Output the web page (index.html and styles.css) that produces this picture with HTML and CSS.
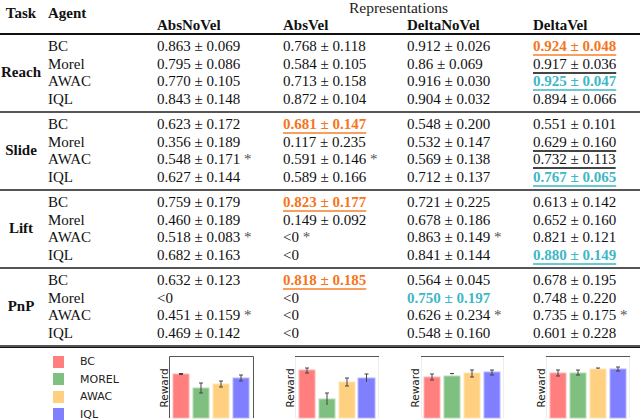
FILE: index.html
```html
<!DOCTYPE html>
<html>
<head>
<meta charset="utf-8">
<link rel="stylesheet" href="styles.css">
</head>
<body>
<div class="page">
  <div class="thead">
    <div class="h-task">Task</div>
    <div class="h-agent">Agent</div>
    <div class="h-rep">Representations</div>
    <div class="h-col">AbsNoVel</div>
    <div class="h-col">AbsVel</div>
    <div class="h-col">DeltaNoVel</div>
    <div class="h-col">DeltaVel</div>
  </div>

  <div class="section">
    <div class="task">Reach</div>
    <div class="agent">BC</div><div>0.863 ± 0.069</div><div>0.768 ± 0.118</div><div>0.912 ± 0.026</div><div><span class="best-o">0.924 ± 0.048</span></div>
    <div class="agent">Morel</div><div>0.795 ± 0.086</div><div>0.584 ± 0.105</div><div>0.86 ± 0.069</div><div><span class="second">0.917 ± 0.036</span></div>
    <div class="agent">AWAC</div><div>0.770 ± 0.105</div><div>0.713 ± 0.158</div><div>0.916 ± 0.030</div><div><span class="best-t">0.925 ± 0.047</span></div>
    <div class="agent">IQL</div><div>0.843 ± 0.148</div><div>0.872 ± 0.104</div><div>0.904 ± 0.032</div><div>0.894 ± 0.066</div>
  </div>

  <div class="section">
    <div class="task">Slide</div>
    <div class="agent">BC</div><div>0.623 ± 0.172</div><div><span class="best-o">0.681 ± 0.147</span></div><div>0.548 ± 0.200</div><div>0.551 ± 0.101</div>
    <div class="agent">Morel</div><div>0.356 ± 0.189</div><div>0.117 ± 0.235</div><div>0.532 ± 0.147</div><div><span class="second">0.629 ± 0.160</span></div>
    <div class="agent">AWAC</div><div>0.548 ± 0.171 <span class="ast">*</span></div><div>0.591 ± 0.146 <span class="ast">*</span></div><div>0.569 ± 0.138</div><div><span class="second">0.732 ± 0.113</span></div>
    <div class="agent">IQL</div><div>0.627 ± 0.144</div><div>0.589 ± 0.166</div><div>0.712 ± 0.137</div><div><span class="best-t">0.767 ± 0.065</span></div>
  </div>

  <div class="section">
    <div class="task">Lift</div>
    <div class="agent">BC</div><div>0.759 ± 0.179</div><div><span class="best-o">0.823 ± 0.177</span></div><div>0.721 ± 0.225</div><div>0.613 ± 0.142</div>
    <div class="agent">Morel</div><div>0.460 ± 0.189</div><div>0.149 ± 0.092</div><div>0.678 ± 0.186</div><div>0.652 ± 0.160</div>
    <div class="agent">AWAC</div><div>0.518 ± 0.083 <span class="ast">*</span></div><div>&lt;0 <span class="ast">*</span></div><div>0.863 ± 0.149 <span class="ast">*</span></div><div>0.821 ± 0.121</div>
    <div class="agent">IQL</div><div>0.682 ± 0.163</div><div>&lt;0</div><div>0.841 ± 0.144</div><div><span class="best-t">0.880 ± 0.149</span></div>
  </div>

  <div class="section">
    <div class="task">PnP</div>
    <div class="agent">BC</div><div>0.632 ± 0.123</div><div><span class="best-o">0.818 ± 0.185</span></div><div>0.564 ± 0.045</div><div>0.678 ± 0.195</div>
    <div class="agent">Morel</div><div>&lt;0</div><div>&lt;0</div><div><span class="teal">0.750 ± 0.197</span></div><div>0.748 ± 0.220</div>
    <div class="agent">AWAC</div><div>0.451 ± 0.159 <span class="ast">*</span></div><div>&lt;0</div><div>0.626 ± 0.234 <span class="ast">*</span></div><div>0.735 ± 0.175 <span class="ast">*</span></div>
    <div class="agent">IQL</div><div>0.469 ± 0.142</div><div>&lt;0</div><div>0.548 ± 0.160</div><div>0.601 ± 0.228</div>
  </div>

  <div class="charts">
    <div class="legend">
      <div class="leg"><span class="sw c-bc"></span>BC</div>
      <div class="leg"><span class="sw c-morel"></span>MOREL</div>
      <div class="leg"><span class="sw c-awac"></span>AWAC</div>
      <div class="leg"><span class="sw c-iql"></span>IQL</div>
    </div>

    <svg class="chart" width="110" height="72" viewBox="0 0 110 72">
      <text class="ylab" transform="translate(11 38) rotate(-90)">Reward</text>
      <rect class="b-bc" x="16" y="24" width="16" height="44"/>
      <rect class="b-morel" x="36" y="38" width="16" height="30"/>
      <rect class="b-awac" x="56" y="34" width="16" height="34"/>
      <rect class="b-iql" x="76" y="28" width="16" height="40"/>
      <path class="err" d="M24 23.5v1M22 23.5h4M22 24.5h4 M44 33v10M42 33h4M42 43h4 M64 31v6M62 31h4M62 37h4 M84 25v6M82 25h4M82 31h4"/>
      <path class="spine-d" d="M12.5 68V6.5H96.5V68"/>
    </svg>

    <svg class="chart" width="110" height="72" viewBox="0 0 110 72">
      <text class="ylab" transform="translate(11 38) rotate(-90)">Reward</text>
      <path class="spine-l" d="M12.5 68V6.5M95.5 6.5V68"/>
      <rect class="b-bc" x="16" y="20" width="16" height="48"/>
      <rect class="b-morel" x="36" y="49" width="16" height="19"/>
      <rect class="b-awac" x="56" y="32" width="16" height="36"/>
      <rect class="b-iql" x="75" y="28" width="17" height="40"/>
      <path class="err" d="M24 18v5M22 18h4M22 23h4 M44 43v12M42 43h4 M64 28v8M62 28h4M62 36h4 M83.5 24v8M81.5 24h4"/>
      <path class="spine-d" d="M12 6.5H96"/>
    </svg>

    <svg class="chart" width="110" height="72" viewBox="0 0 110 72">
      <text class="ylab" transform="translate(12 38) rotate(-90)">Reward</text>
      <path class="spine-l" d="M14.5 68V6.5M96.5 6.5V68"/>
      <rect class="b-bc" x="17" y="27" width="16" height="41"/>
      <rect class="b-morel" x="37" y="26" width="16" height="42"/>
      <rect class="b-awac" x="57" y="23" width="16" height="45"/>
      <rect class="b-iql" x="77" y="22" width="16" height="46"/>
      <path class="err" d="M25 24v6M23 24h4M23 30h4 M45 23.5v1M43 23.5h4 M65 20v7M63 20h4M63 27h4 M85 20v5M83 20h4M83 25h4"/>
      <path class="spine-d" d="M14 6.5H97"/>
    </svg>

    <svg class="chart" width="110" height="72" viewBox="0 0 110 72">
      <text class="ylab" transform="translate(12 38) rotate(-90)">Reward</text>
      <path class="spine-l" d="M13.5 68V6.5M96.5 6.5V68"/>
      <rect class="b-bc" x="17" y="23" width="16" height="45"/>
      <rect class="b-morel" x="37" y="23" width="16" height="45"/>
      <rect class="b-awac" x="57" y="19" width="16" height="49"/>
      <rect class="b-iql" x="77" y="19" width="16" height="49"/>
      <path class="err" d="M25 20v6M23 20h4M23 26h4 M45 20v5M43 20h4M43 25h4 M65 18v1M63 18h4 M85 17v4M83 17h4M83 21h4"/>
      <path class="spine-d" d="M13 6.5H97"/>
    </svg>
  </div>
</div>
</body>
</html>
```

FILE: styles.css
```css
html, body {
  margin: 0;
  padding: 0;
  background: #ffffff;
}

.page {
  width: 640px;
  height: 420px;
  overflow: hidden;
  font-family: "Liberation Serif", "Times New Roman", serif;
  font-size: 15px;
  color: #111;
}

.thead,
.section,
.charts {
  display: grid;
  grid-template-columns: 42px 115px 126px 124px 126px 107px;
}

.thead {
  grid-template-rows: 17px 16px;
  border-bottom: 2px solid #111;
  font-weight: bold;
}

.h-task {
  grid-column: 1;
  grid-row: 1 / span 2;
  text-align: center;
  line-height: 17px;
  padding-top: 5px;
}

.h-agent {
  grid-column: 2;
  grid-row: 1 / span 2;
  padding-left: 6px;
  line-height: 17px;
  padding-top: 5px;
}

.h-rep {
  grid-column: 3 / span 4;
  grid-row: 1;
  text-align: center;
  font-weight: normal;
  font-size: 15.5px;
  line-height: 15px;
  color: #222;
}

.h-col {
  grid-row: 2;
  line-height: 16px;
}

.section {
  grid-template-rows: repeat(4, 17.5px);
  line-height: 17.5px;
  padding: 3px 0 3px;
  border-bottom: 2px solid #555;
}

.section:last-of-type {
  border-bottom: 3px solid #111;
}

.task {
  grid-column: 1;
  grid-row: 1 / span 4;
  align-self: center;
  text-align: center;
  font-weight: bold;
}

.agent {
  padding-left: 6px;
}

.ast {
  color: #555;
}

.best-o {
  color: #f5761d;
  font-weight: bold;
  text-decoration: underline;
  text-decoration-color: #f7a060;
  text-decoration-thickness: 1.5px;
  text-underline-offset: 3px;
}

.best-t {
  color: #3fb7c5;
  font-weight: bold;
  text-decoration: underline;
  text-decoration-color: #6cc9d3;
  text-decoration-thickness: 1.5px;
  text-underline-offset: 3px;
}

.teal {
  color: #3fb7c5;
  font-weight: bold;
}

.second {
  text-decoration: underline;
  text-decoration-color: #444;
  text-decoration-thickness: 1.5px;
  text-underline-offset: 3px;
}

.charts {
  border-top: 1px solid #111;
  height: 73px;
  padding-top: 2px;
}

.legend {
  grid-column: 1 / span 2;
  display: flex;
  flex-direction: column;
  gap: 6.5px;
  padding: 6px 0 0 53px;
  font-family: "DejaVu Sans", sans-serif;
  font-size: 11px;
  color: #222;
}

.leg {
  display: flex;
  align-items: center;
  height: 11px;
  gap: 16px;
}

.sw {
  display: block;
  width: 11px;
  height: 12px;
}

.c-bc { background: #ff7f7f; }
.c-morel { background: #7fbf7f; }
.c-awac { background: #ffd07f; }
.c-iql { background: #7f7fff; }

.chart {
  display: block;
}

.ylab {
  font-family: "DejaVu Sans", sans-serif;
  font-size: 10.5px;
  fill: #222;
  text-anchor: middle;
}

.b-bc { fill: #ff7f7f; stroke: #ffb5b5; stroke-width: 1; }
.b-morel { fill: #7fbf7f; stroke: #b5dcb5; stroke-width: 1; }
.b-awac { fill: #ffd07f; stroke: #ffe3b5; stroke-width: 1; }
.b-iql { fill: #7f7fff; stroke: #b5b5ff; stroke-width: 1; }

.err {
  stroke: #444;
  stroke-width: 1;
  fill: none;
}

.spine-d {
  stroke: #555;
  stroke-width: 1;
  fill: none;
}

.spine-l {
  stroke: #eeeeee;
  stroke-width: 1;
  fill: none;
}
```
